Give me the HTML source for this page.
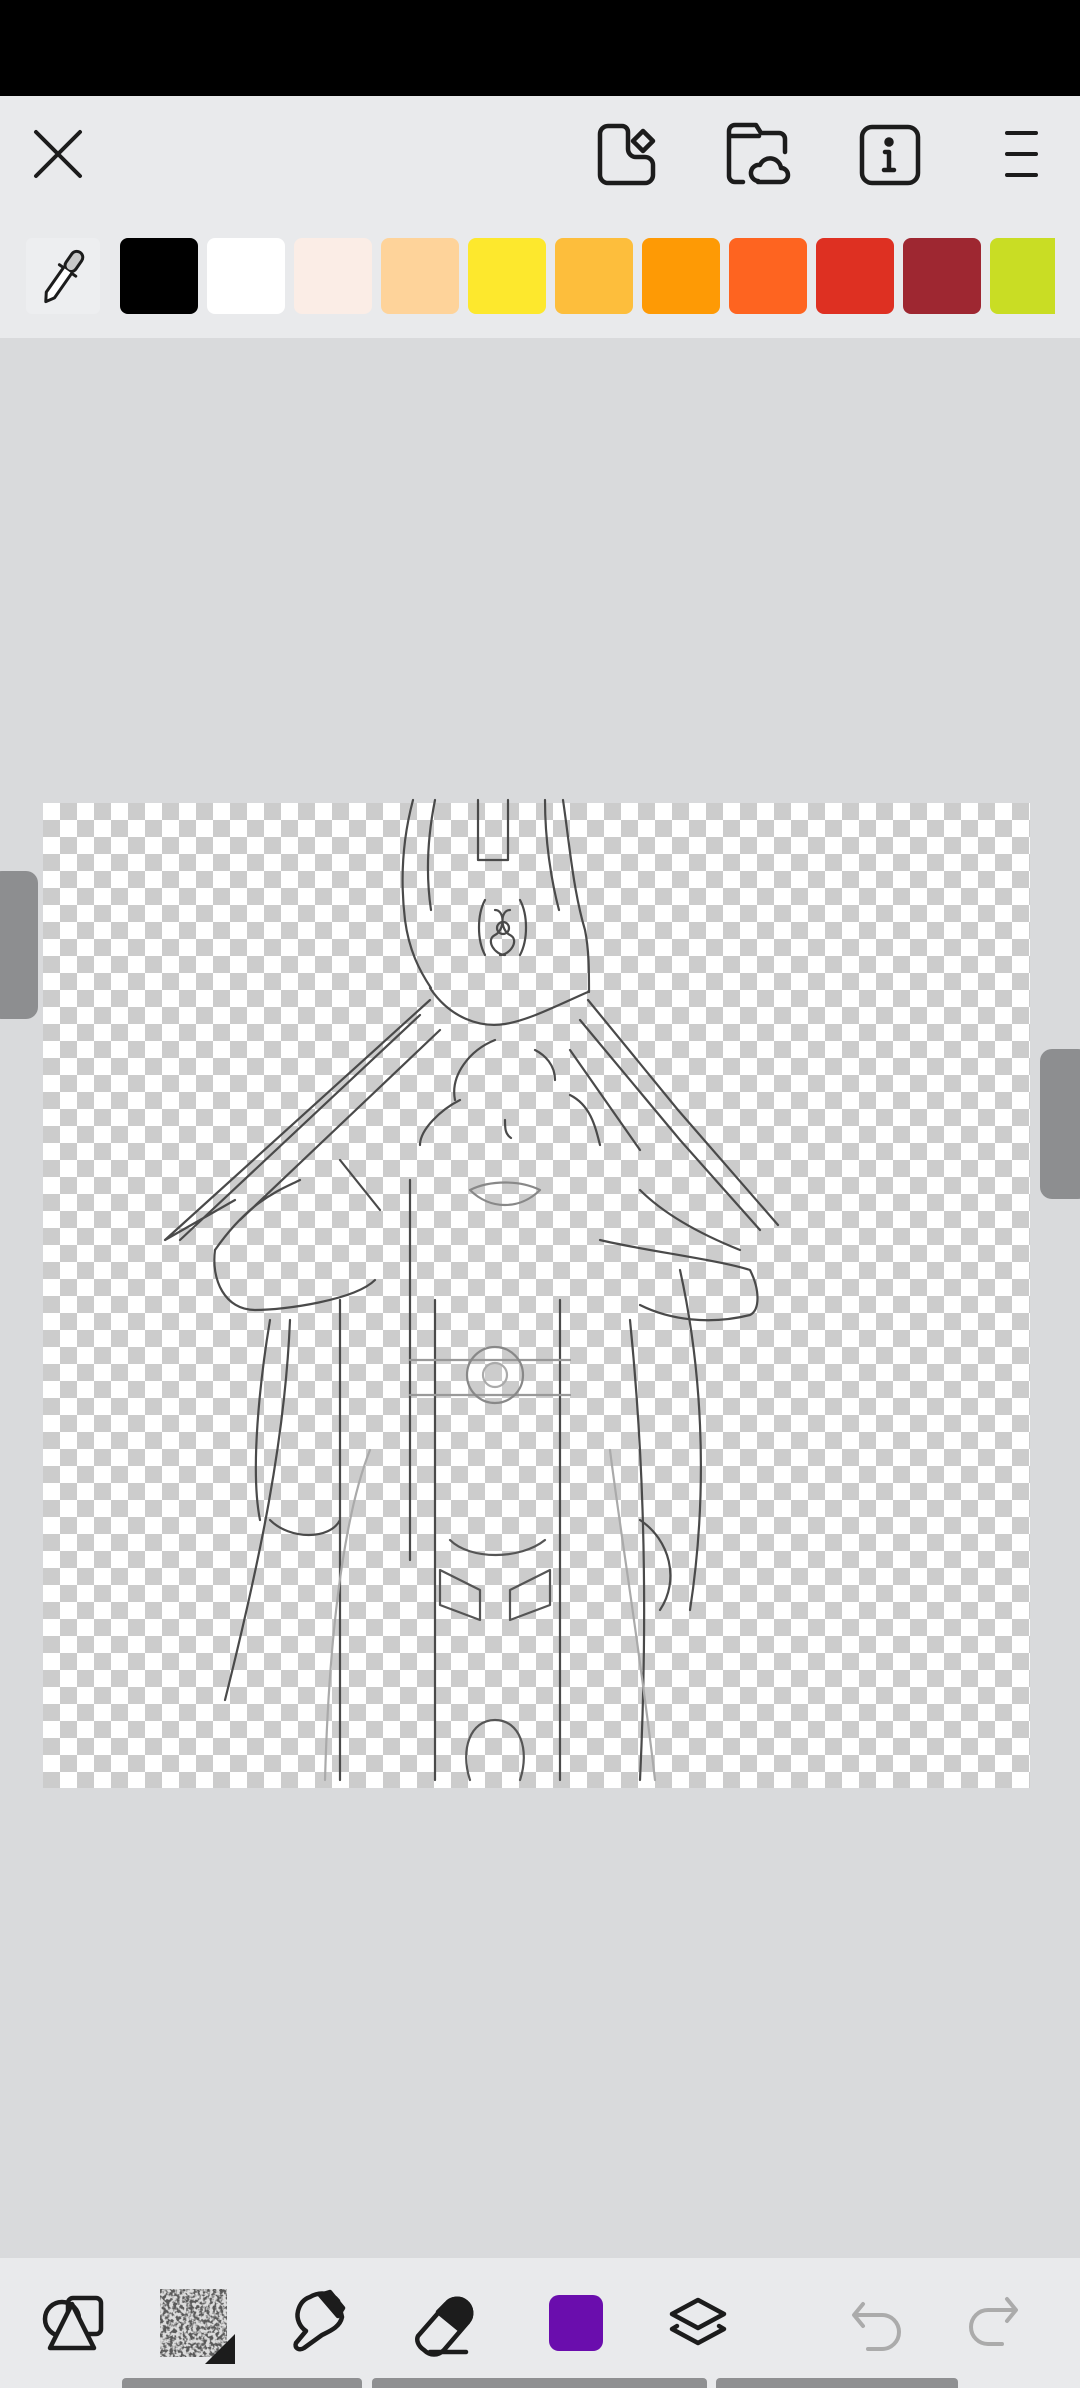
<!DOCTYPE html>
<html><head><meta charset="utf-8"><style>
html,body{margin:0;padding:0;width:1080px;height:2388px;overflow:hidden;background:#d9dadc;font-family:"Liberation Sans",sans-serif}
.a{position:absolute}
</style></head><body>
<div class="a" style="left:0;top:0;width:1080px;height:96px;background:#000"></div>
<div class="a" style="left:0;top:96px;width:1080px;height:242px;background:#e9eaec"></div>
<div class="a" style="left:0;top:2258px;width:1080px;height:130px;background:#e9eaec"></div>
<div class="a" style="left:26px;top:238px;width:74px;height:76px;background:#edeef0;border-radius:6px"></div>
<div class="a" style="left:120px;top:238px;width:78px;height:76px;background:#000;border-radius:8px"></div>
<div class="a" style="left:207px;top:238px;width:78px;height:76px;background:#fff;border-radius:8px"></div>
<div class="a" style="left:294px;top:238px;width:78px;height:76px;background:#fbede6;border-radius:8px"></div>
<div class="a" style="left:381px;top:238px;width:78px;height:76px;background:#fed39a;border-radius:8px"></div>
<div class="a" style="left:468px;top:238px;width:78px;height:76px;background:#fde82d;border-radius:8px"></div>
<div class="a" style="left:555px;top:238px;width:78px;height:76px;background:#fdbe3c;border-radius:8px"></div>
<div class="a" style="left:642px;top:238px;width:78px;height:76px;background:#fe9a05;border-radius:8px"></div>
<div class="a" style="left:729px;top:238px;width:78px;height:76px;background:#fe6420;border-radius:8px"></div>
<div class="a" style="left:816px;top:238px;width:78px;height:76px;background:#de3022;border-radius:8px"></div>
<div class="a" style="left:903px;top:238px;width:78px;height:76px;background:#9e2731;border-radius:8px"></div>
<div class="a" style="left:990px;top:238px;width:65px;height:76px;background:#c9dd24;border-radius:8px 0 0 8px"></div>
<div class="a" style="left:43px;top:803px;width:987px;height:985px;background-color:#fff;background-image:linear-gradient(45deg,#ccc 25%,transparent 25%,transparent 75%,#ccc 75%),linear-gradient(45deg,#ccc 25%,transparent 25%,transparent 75%,#ccc 75%);background-size:34px 34px;background-position:0 0,17px 17px"></div>
<div class="a" style="left:-10px;top:871px;width:48px;height:148px;background:#8d8e90;border-radius:12px"></div>
<div class="a" style="left:1040px;top:1049px;width:50px;height:150px;background:#8d8e90;border-radius:12px"></div>
<div class="a" style="left:549px;top:2295px;width:54px;height:56px;background:#6a0dad;border-radius:10px"></div>
<div class="a" style="left:122px;top:2378px;width:240px;height:10px;background:#8f9092;border-radius:4px 4px 0 0"></div>
<div class="a" style="left:372px;top:2378px;width:335px;height:10px;background:#8f9092;border-radius:4px 4px 0 0"></div>
<div class="a" style="left:716px;top:2378px;width:242px;height:10px;background:#8f9092;border-radius:4px 4px 0 0"></div>
<svg class="a" style="left:0;top:0" width="1080" height="2388" viewBox="0 0 1080 2388" fill="none" stroke="#1c1c1c" stroke-width="4.5" stroke-linecap="round" stroke-linejoin="round">
<defs><filter id="n" x="0" y="0" width="100%" height="100%"><feTurbulence type="fractalNoise" baseFrequency="0.3" numOctaves="2" seed="3"/><feColorMatrix type="matrix" values="0 0 0 0 0.1  0 0 0 0 0.1  0 0 0 0 0.1  5 0 0 0 -2.1"/></filter></defs>
<rect x="160" y="2289" width="67" height="68" fill="#dcdcdc" stroke="none"/>
<rect x="160" y="2289" width="67" height="68" filter="url(#n)" stroke="none"/>
<path d="M36 132L80 176M80 132L36 176" stroke-width="4"/>
<path d="M608 126h14a6 6 0 0 1 6 6v17a8 8 0 0 0 8 8h9a8 8 0 0 1 8 8v10a8 8 0 0 1-8 8h-37a8 8 0 0 1-8-8v-41a8 8 0 0 1 8-8z"/>
<path d="M633 141l10-10 10 10-10 10z"/>
<path d="M743 182h-8a6 6 0 0 1-6-6v-45a6 6 0 0 1 6-6h21l5 8h18a6 6 0 0 1 6 6v13M729 136h30"/>
<path d="M758 181a8 8 0 0 1 2-16a11 11 0 0 1 21 3a7 7 0 0 1 0 14h-23z"/>
<rect x="862" y="127" width="56" height="56" rx="10"/>
<circle cx="889" cy="142" r="2.5" fill="#1c1c1c"/><path d="M889 152v18M884 170h10M885 152h4"/>
<path d="M1007 133h29M1007 154h29M1007 175h29" stroke-width="4"/>
<g transform="translate(63 277) rotate(35)" stroke-width="3">
<rect x="-6" y="-30" width="12" height="22" rx="6" fill="#c8c8c8"/>
<path d="M-10 -8h20"/>
<path d="M-5 -8v30l5 8 5-8v-30" fill="#fff"/>
</g>
<circle cx="62" cy="2319" r="17"/>
<rect x="68" y="2298" width="33" height="36" rx="5"/>
<path d="M72 2304l-22 44h44z" fill="#e9eaec"/>
<path d="M205 2364h30v-30z" fill="#1c1c1c" stroke="none"/>
<path d="M310 2297c10-6 22-4 28 4l4 16c-2 10-12 14-20 18l-18 13c-5 3-10 0-8-5l10-12c-6-4-10-12-8-20 2-8 6-12 12-14z"/>
<path d="M320 2295l10-3 13 16-5 8z" fill="#1c1c1c"/>
<path d="M418 2336l28-32a14 14 0 0 1 22 18l-24 28c-6 6-14 6-20 0-6-4-8-10-6-14zM430 2352h36"/>
<path d="M446 2304a14 14 0 0 1 22 18l-8 8-22-18z" fill="#1c1c1c"/>
<path d="M698 2300l-26 14 26 14 26-14z"/><path d="M677 2326l-5 3 26 14 26-14-5-3"/>
<g stroke="#ababab" stroke-width="4"><path d="M863 2304l-9 11 9 11M856 2315h26a17 17 0 0 1 0 34h-14"/><path d="M1007 2299l9 11-9 11M1014 2310h-26a17 17 0 0 0 0 34h14"/></g>
<g transform="translate(40 800)" stroke="#4a4a4a" stroke-width="2.2" fill="none">
<path d="M373 0c-8 30-14 70-8 120 4 30 14 50 26 68M395 0c-6 30-10 70-4 110M523 0c6 40 10 90 22 130 4 20 4 40 4 62M505 0c0 40 6 80 14 110M438 0v60h30V0"/>
<path d="M390 188c20 30 50 40 75 36s55-20 83-32"/>
<path d="M445 100c-8 15-8 40 0 55M480 100c8 15 8 40 0 55M455 110c10 0 10 20 0 25s0 20 10 20M470 110c-10 0 -10 20 0 25s0 20-10 20"/>
<circle cx="463" cy="128" r="6"/>
<path d="M390 200L125 440l70-40M380 215L140 440M400 230L200 420M548 200l90 110 100 115M540 220l100 120 80 90M530 250l70 100"/>
<path d="M455 240c-25 10-45 35-40 60M495 250c10 5 20 15 20 30"/>
<path d="M420 300c-20 10-40 30-40 45M530 295c20 10 25 30 30 50M465 320c0 8 0 14 6 18"/>
<path d="M175 450c-4 30 10 60 40 60s100-10 120-30M560 440c40 10 120 20 150 30 10 20 10 40 0 45-40 10-80 5-110-10"/>
<path d="M260 380c-20 10-50 20-85 70M300 360l40 50M600 390c20 20 50 40 100 60"/>
<path d="M430 390c20-10 50-10 70 0-20 20-50 20-70 0z" stroke="#888"/>
<path d="M230 520c-10 60-20 150-10 200M250 520c-5 120 -30 240-65 380M300 500v480M370 380v380M395 500v480M520 500v480M590 520c10 100 20 250 10 460M640 470c20 90 30 210 10 340M230 720c20 20 60 20 70 0M600 720c30 20 40 60 20 90"/>
<path d="M370 560h160M370 595h160" stroke="#999"/>
<circle cx="455" cy="575" r="28" stroke="#888"/><circle cx="455" cy="575" r="12" stroke="#aaa"/>
<path d="M410 740c20 20 70 20 95 0M400 770l40 20 0 30-40-15zM510 770l-40 20 0 30 40-15zM430 980c-10-30 0-60 25-60s35 30 25 60" stroke="#555"/>
<path d="M330 650c-20 50-40 150-45 330M570 650c10 80 30 200 45 330" stroke="#aaa"/>
</g>
</svg>
</body></html>
